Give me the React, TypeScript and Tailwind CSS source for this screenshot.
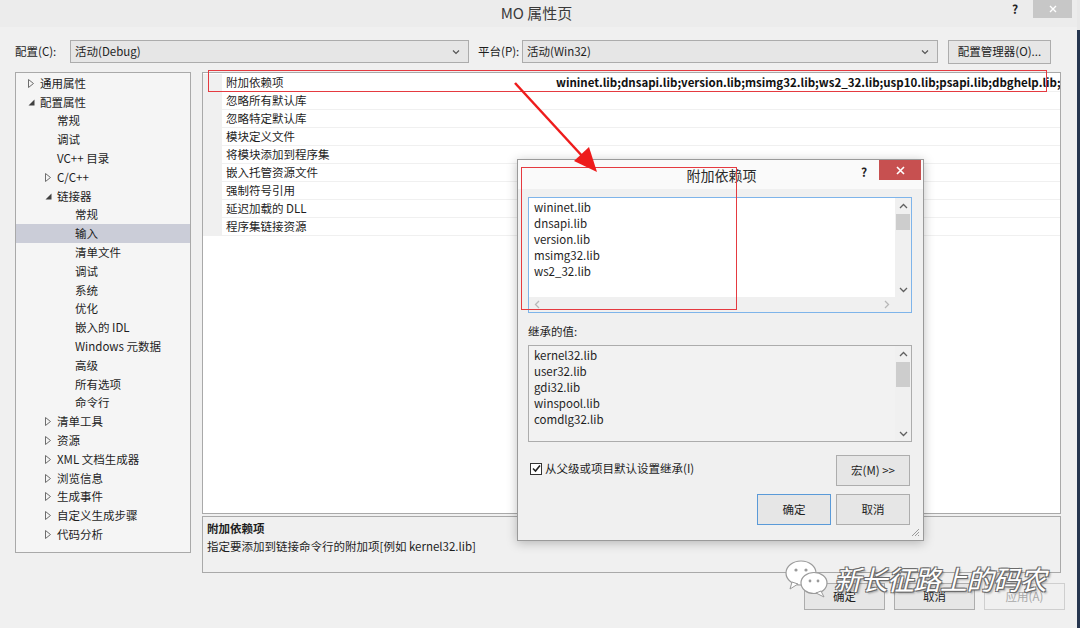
import React from "react";

type TreeItem = { level: 0 | 1 | 2; exp?: "r" | "d"; text: string; sel?: boolean };

const tree: TreeItem[] = [
  { level: 0, exp: "r", text: "通用属性" },
  { level: 0, exp: "d", text: "配置属性" },
  { level: 1, text: "常规" },
  { level: 1, text: "调试" },
  { level: 1, text: "VC++ 目录" },
  { level: 1, exp: "r", text: "C/C++" },
  { level: 1, exp: "d", text: "链接器" },
  { level: 2, text: "常规" },
  { level: 2, text: "输入", sel: true },
  { level: 2, text: "清单文件" },
  { level: 2, text: "调试" },
  { level: 2, text: "系统" },
  { level: 2, text: "优化" },
  { level: 2, text: "嵌入的 IDL" },
  { level: 2, text: "Windows 元数据" },
  { level: 2, text: "高级" },
  { level: 2, text: "所有选项" },
  { level: 2, text: "命令行" },
  { level: 1, exp: "r", text: "清单工具" },
  { level: 1, exp: "r", text: "资源" },
  { level: 1, exp: "r", text: "XML 文档生成器" },
  { level: 1, exp: "r", text: "浏览信息" },
  { level: 1, exp: "r", text: "生成事件" },
  { level: 1, exp: "r", text: "自定义生成步骤" },
  { level: 1, exp: "r", text: "代码分析" },
];

const props = [
  "附加依赖项",
  "忽略所有默认库",
  "忽略特定默认库",
  "模块定义文件",
  "将模块添加到程序集",
  "嵌入托管资源文件",
  "强制符号引用",
  "延迟加载的 DLL",
  "程序集链接资源",
];

const padByLevel = ["pl-[6px]", "pl-[23px]", "pl-[41px]"];

function Expander({ exp }: { exp?: "r" | "d" }) {
  return (
    <span className="w-[18px] h-full flex items-center justify-center shrink-0">
      {exp === "r" && (
        <svg width="6" height="9" viewBox="0 0 6 9">
          <polygon points="0.5,0.5 5.5,4.5 0.5,8.5" fill="none" stroke="#6d6d6d" strokeWidth="1" />
        </svg>
      )}
      {exp === "d" && (
        <svg width="7" height="7" viewBox="0 0 7 7">
          <polygon points="6.5,0.5 6.5,6.5 0.5,6.5" fill="#404040" />
        </svg>
      )}
    </span>
  );
}

function Chevron({ dir, color = "#606060" }: { dir: "up" | "down" | "left" | "right"; color?: string }) {
  const pts =
    dir === "up"
      ? "1,6 4.5,2.5 8,6"
      : dir === "down"
      ? "1,3 4.5,6.5 8,3"
      : dir === "left"
      ? "6,1 2.5,4.5 6,8"
      : "3,1 6.5,4.5 3,8";
  return (
    <svg width="9" height="9" viewBox="0 0 9 9">
      <polyline points={pts} fill="none" stroke={color} strokeWidth="1.3" />
    </svg>
  );
}

function Combo({ text, w }: { text: string; w: string }) {
  return (
    <div className={`${w} h-[23px] border border-[#acacac] bg-[#e6e6e6] flex items-center pl-[4px] pr-[8px]`}>
      <span className="flex-1 text-[11.5px] text-[#1e1e1e]">{text}</span>
      <svg width="8" height="6" viewBox="0 0 8 6">
        <polyline points="1,1.5 4,4.5 7,1.5" fill="none" stroke="#555" strokeWidth="1.2" />
      </svg>
    </div>
  );
}

function WinButton({ children, w, disabled }: { children: React.ReactNode; w: string; disabled?: boolean }) {
  return (
    <div
      className={`${w} h-[27px] flex items-center justify-center text-[11.5px] border ${
        disabled ? "bg-[#f0f0f0] text-[#a8a8a8] border-[#cfcfcf]" : "bg-[#e6e6e6] text-[#1e1e1e] border-[#adadad]"
      }`}
    >
      {children}
    </div>
  );
}

function VScroll({ thumb }: { thumb: string }) {
  return (
    <div className="w-[16px] bg-[#f0f0f0] flex flex-col items-center">
      <div className="h-[16px] flex items-center justify-center">
        <Chevron dir="up" />
      </div>
      <div className={`w-[14px] bg-[#cdcdcd] ${thumb}`} />
      <div className="flex-1" />
      <div className="h-[16px] flex items-center justify-center">
        <Chevron dir="down" />
      </div>
    </div>
  );
}

function Lines({ items }: { items: string[] }) {
  return (
    <div className="flex-1 flex flex-col pl-[5px] pt-[1px] text-[11.5px] text-[#1e1e1e] leading-[16px]">
      {items.map((t) => (
        <div key={t} className="h-[16px]">
          {t}
        </div>
      ))}
    </div>
  );
}

export default function App() {
  const font = "font-['Segoe_UI','Noto_Sans_CJK_SC',sans-serif]";
  return (
    <div className={`w-[1080px] h-[628px] relative overflow-hidden bg-[#f0f0f0] flex ${font}`}>
      {/* main window */}
      <div className="w-[1077px] h-full flex flex-col bg-[#f0f0f0]">
        {/* title bar */}
        <div className="h-[27px] flex items-start bg-[#ececec]">
          <div className="flex-1 h-full flex items-center justify-center text-[15px] text-[#3a3a3a] pl-[68px]">MO 属性页</div>
          <div className="w-[20px] h-[18px] flex items-center justify-center text-[12px] font-bold text-[#222] mr-[8px]">?</div>
          <div className="w-[39px] h-[18px] bg-[#c7c7c7] flex items-center justify-center mr-[5px]">
            <svg width="8" height="8" viewBox="0 0 8 8">
              <path d="M1 1 L7 7 M7 1 L1 7" stroke="#ffffff" strokeWidth="1.4" />
            </svg>
          </div>
        </div>

        {/* config row */}
        <div className="h-[23px] mt-[13px] flex items-center pl-[15px]">
          <span className="w-[55px] text-[11.5px] text-[#1e1e1e]">配置(C):</span>
          <Combo text="活动(Debug)" w="w-[399px]" />
          <span className="w-[53px] pl-[9px] text-[11.5px] text-[#1e1e1e]">平台(P):</span>
          <Combo text="活动(Win32)" w="w-[416px]" />
          <div className="ml-[10px] w-[103px] h-[24px] border border-[#adadad] bg-[#e6e6e6] flex items-center justify-center text-[11.5px] text-[#1e1e1e]">
            配置管理器(O)...
          </div>
        </div>

        {/* main area */}
        <div className="flex mt-[9px] pl-[15px]">
          {/* tree */}
          <div className="w-[176px] h-[481px] border border-[#a9a9a9] bg-[#f5f5f5] pt-[1px] text-[11.5px] text-[#1e1e1e]">
            {tree.map((it, i) => (
              <div
                key={i}
                className={`h-[18.8px] flex items-center ${padByLevel[it.level]} ${it.sel ? "bg-[#cbcdd8]" : ""}`}
              >
                <Expander exp={it.exp} />
                <span className="whitespace-nowrap">{it.text}</span>
              </div>
            ))}
          </div>

          {/* right column */}
          <div className="ml-[11px] w-[859px] flex flex-col">
            <div className="h-[442px] border border-[#a9a9a9] bg-white pt-[1px] overflow-hidden">
              {props.map((p, i) => (
                <div key={p} className="h-[18px] flex border-b border-[#f0f0f0]">
                  <div className="w-[19px] bg-[#f0f0f0] shrink-0" />
                  <div className="w-[330px] shrink-0 pl-[4px] flex items-center text-[11.5px] text-[#1e1e1e] whitespace-nowrap">
                    {p}
                  </div>
                  <div className="flex-1 pl-[4px] flex items-center overflow-hidden whitespace-nowrap text-[11.5px] font-bold text-[#111]">
                    {i === 0 ? "wininet.lib;dnsapi.lib;version.lib;msimg32.lib;ws2_32.lib;usp10.lib;psapi.lib;dbghelp.lib;winmm.lib" : ""}
                  </div>
                </div>
              ))}
            </div>
            <div className="mt-[2px] h-[57px] border border-[#a9a9a9] bg-[#f0f0f0] pl-[4px] pt-[2px] text-[11.5px] text-[#1e1e1e] leading-[18px]">
              <div className="font-bold">附加依赖项</div>
              <div>指定要添加到链接命令行的附加项[例如 kernel32.lib]</div>
            </div>
          </div>
        </div>

        {/* bottom buttons */}
        <div className="flex mt-[10px] pl-[804px] gap-[9px]">
          <WinButton w="w-[81px]">确定</WinButton>
          <WinButton w="w-[81px]">取消</WinButton>
          <WinButton w="w-[81px]" disabled>
            应用(A)
          </WinButton>
        </div>
      </div>
      {/* right dark strip */}
      <div className="w-[3px] h-full flex flex-col">
        <div className="h-[30px] bg-[#e8e8e8]" />
        <div className="flex-1 bg-[#27364f]" />
      </div>

      {/* red highlight on first property row */}
      <div className="absolute left-[208px] top-[70px] w-[839px] h-[22px] border border-[#e53a40]" />

      {/* dialog */}
      <div className="absolute left-[517px] top-[159px] w-[407px] h-[382px] border border-[#9a9a9a] bg-[#f0f0f0] shadow-[0_2px_10px_rgba(0,0,0,0.25)] flex flex-col">
        <div className="h-[29px] bg-[#fafafa] flex items-start relative">
          <div className="flex-1 h-full flex items-center justify-center text-[14px] text-[#2a2a2a] pl-[2px] pt-[1px]">附加依赖项</div>
          <div className="absolute left-[343px] top-[3px] text-[12px] font-bold text-[#222]">?</div>
          <div className="absolute left-[361px] top-[0px] w-[42px] h-[20px] bg-[#c75050] flex items-center justify-center">
            <svg width="9" height="9" viewBox="0 0 9 9">
              <path d="M1 1 L8 8 M8 1 L1 8" stroke="#ffffff" strokeWidth="1.6" />
            </svg>
          </div>
        </div>
        <div className="flex-1 px-[10px] pt-[8px] flex flex-col">
          {/* list 1 */}
          <div className="w-[384px] h-[116px] border border-[#7eb4ea] bg-white flex flex-col">
            <div className="flex-1 flex">
              <Lines items={["wininet.lib", "dnsapi.lib", "version.lib", "msimg32.lib", "ws2_32.lib"]} />
              <VScroll thumb="h-[16px]" />
            </div>
            <div className="h-[15px] flex">
              <div className="flex-1 bg-[#f0f0f0] flex items-center justify-between px-[4px]">
                <Chevron dir="left" color="#b8b8b8" />
                <Chevron dir="right" color="#b8b8b8" />
              </div>
              <div className="w-[16px] bg-[#f0f0f0]" />
            </div>
          </div>

          <div className="mt-[10px] text-[11.5px] text-[#1e1e1e] leading-[16px]">继承的值:</div>

          <div className="mt-[6px] w-[384px] h-[97px] flex border border-[#acacac] bg-[#f2f2f2]">
            <Lines items={["kernel32.lib", "user32.lib", "gdi32.lib", "winspool.lib", "comdlg32.lib"]} />
            <VScroll thumb="h-[25px]" />
          </div>

          <div className="mt-[13px] flex items-start">
            <div className="flex items-center mt-[5px] flex-1">
              <div className="w-[12px] h-[12px] border border-[#333] bg-white flex items-center justify-center ml-[2px]">
                <svg width="9" height="9" viewBox="0 0 9 9">
                  <polyline points="1,4.5 3.5,7 8,1.5" fill="none" stroke="#222" strokeWidth="1.6" />
                </svg>
              </div>
              <span className="ml-[3px] text-[11.5px] text-[#1e1e1e]">从父级或项目默认设置继承(I)</span>
            </div>
            <div className="w-[74px] h-[31px] border border-[#adadad] bg-[#e6e6e6] flex items-center justify-center text-[11.5px] text-[#1e1e1e] mr-[3px]">
              宏(M) &gt;&gt;
            </div>
          </div>

          <div className="mt-[8px] flex justify-end gap-[5px] pr-[3px]">
            <div className="w-[74px] h-[31px] border border-[#5a9ad8] bg-[#e6e6e6] flex items-center justify-center text-[11.5px] text-[#1e1e1e]">
              确定
            </div>
            <div className="w-[74px] h-[31px] border border-[#adadad] bg-[#e6e6e6] flex items-center justify-center text-[11.5px] text-[#1e1e1e]">
              取消
            </div>
          </div>
        </div>
        {/* resize grip */}
        <svg className="absolute right-[3px] bottom-[3px]" width="10" height="10" viewBox="0 0 10 10">
          <path d="M9 2 L2 9 M9 5 L5 9 M9 8 L8 9" stroke="#9a9a9a" strokeWidth="1" />
        </svg>
      </div>

      {/* red highlight in dialog */}
      <div className="absolute left-[521px] top-[167px] w-[216px] h-[143px] border border-[#e53a40]" />

      {/* arrow */}
      <svg className="absolute left-0 top-0 pointer-events-none" width="1080" height="628" viewBox="0 0 1080 628">
        <line x1="515" y1="83" x2="584" y2="158" stroke="#ee1c1c" strokeWidth="2.5" />
        <polygon points="597,172 574,161 589,147" fill="#ee1c1c" />
      </svg>

      {/* watermark */}
      <div className="absolute left-[784px] top-[558px] flex items-center pointer-events-none">
        <svg width="46" height="42" viewBox="0 0 46 42">
          <ellipse cx="17" cy="15" rx="15" ry="12" fill="#ffffff" stroke="#9a9a9a" strokeWidth="1.2" />
          <path d="M8 24 L6 31 L14 26 Z" fill="#ffffff" stroke="#9a9a9a" strokeWidth="1" />
          <circle cx="12" cy="12" r="1.6" fill="#9a9a9a" />
          <circle cx="22" cy="12" r="1.6" fill="#9a9a9a" />
          <ellipse cx="30" cy="25" rx="13" ry="10.5" fill="#ffffff" stroke="#9a9a9a" strokeWidth="1.2" />
          <path d="M37 33 L40 39 L32 35 Z" fill="#ffffff" stroke="#9a9a9a" strokeWidth="1" />
          <circle cx="26" cy="23" r="1.4" fill="#9a9a9a" />
          <circle cx="34" cy="23" r="1.4" fill="#9a9a9a" />
        </svg>
        <span className="ml-[4px] text-[27px] leading-[32px] text-white italic tracking-[-0.5px] font-['Noto_Sans_CJK_SC',sans-serif] [text-shadow:1px_1px_0_#6a6a6a,-1px_-1px_0_#6a6a6a,1px_-1px_0_#6a6a6a,-1px_1px_0_#6a6a6a,2px_2px_2px_rgba(0,0,0,0.3)]">
          新长征路上的码农
        </span>
      </div>
    </div>
  );
}
